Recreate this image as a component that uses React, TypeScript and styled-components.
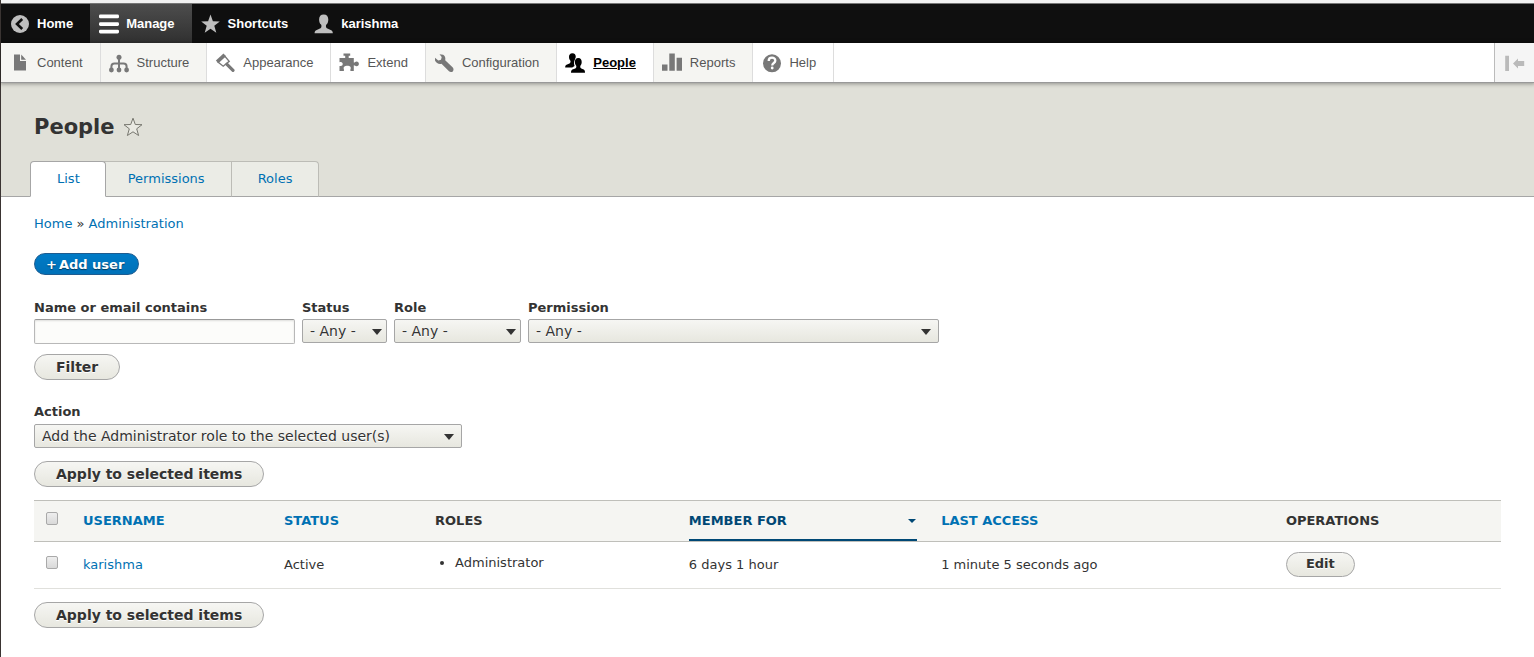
import React, { ReactNode } from "react";
import styled, { createGlobalStyle, css } from "styled-components";

const GlobalStyle = createGlobalStyle`
  *, *::before, *::after { box-sizing: border-box; }
  html { background: #fff; }
  body {
    margin: 0;
    color: #333;
    font: 13px/20px "DejaVu Sans", "Lucida Grande", sans-serif;
  }
  a { color: #0071b3; text-decoration: none; }
`;

const Page = styled.div`
  min-height: 100vh;
  border-left: 1px solid #3a3432;
`;

const TopBar = styled.nav`
  display: flex;
  height: 43px;
  border-top: 3px solid #f2f2f2;
  background: #0f0f0f;
  box-shadow: inset 0 1px 0 #777;
  padding-top: 1px;
  font-family: "Liberation Sans", Arial, sans-serif;
`;

const BarTab = styled.a<{ $active?: boolean }>`
  display: flex;
  align-items: center;
  gap: 7px;
  padding: 0 17px 0 9px;
  color: #fff;
  font-weight: bold;
  ${(p) => p.$active && css`background: linear-gradient(#4d4d4d, #303030);`}
  svg { color: ${(p) => (p.$active ? "#fff" : "#bebebe")}; }
`;

const Tray = styled.nav`
  position: relative;
  display: flex;
  height: 39px;
  background: #fff;
  box-shadow: 0 1px 0 #999, 0 1px 4px 1px rgba(0, 0, 0, 0.35);
  font-family: "Liberation Sans", Arial, sans-serif;
`;

const TrayItem = styled.a<{ $tinted?: boolean; $active?: boolean }>`
  display: flex;
  align-items: center;
  gap: 8px;
  padding: 0 17px 0 8px;
  border-right: 1px solid #ddd;
  background: ${(p) => (p.$tinted ? "#f5f5f2" : "#fff")};
  color: #565656;
  svg { color: #787878; }
  ${(p) =>
    p.$active &&
    css`
      color: #000;
      font-weight: bold;
      text-decoration: underline;
      svg { color: #000; }
    `}
`;

const TrayToggle = styled.button`
  display: flex;
  align-items: center;
  justify-content: center;
  width: 40px;
  margin-left: auto;
  padding: 0;
  border: 0;
  border-left: 1px solid #bbb;
  background: #f5f5f5;
  color: #bababa;
`;

const Glyph = styled.svg`
  display: block;
  flex: none;
  width: 20px;
  height: 20px;
  fill: currentColor;
`;

const Header = styled.header`
  padding: 33px 29px 0;
  border-bottom: 1px solid #a6a6a6;
  background: #e0e0d8;
`;

const TitleRow = styled.div`
  display: flex;
  align-items: center;
  gap: 8px;
  padding-left: 4px;
  margin-bottom: 22px;
`;

const Title = styled.h1`
  margin: 0;
  font-size: 21px;
  line-height: 24px;
`;

const StarButton = styled.button`
  padding: 0;
  border: 0;
  background: none;
  color: #77776f;
`;

const Tabs = styled.nav`
  display: flex;
  margin-bottom: -1px;
`;

const Tab = styled.a<{ $active?: boolean }>`
  padding: 7px 26px;
  border: 1px solid #bcbcb6;
  border-left-width: 0;
  border-bottom-color: #a6a6a6;
  background: #ebece6;
  &:last-child { border-top-right-radius: 4px; }
  ${(p) =>
    p.$active &&
    css`
      z-index: 1;
      margin-right: -4px;
      border-color: #a6a6a6 #a6a6a6 #fff;
      border-left-width: 1px;
      padding-right: 25px;
      border-radius: 4px 4px 0 0;
      background: #fff;
    `}
`;

const Main = styled.main`
  padding: 17px 33px 29px;
`;

const Breadcrumb = styled.nav`
  margin-bottom: 19px;
`;

const AddLink = styled.a`
  display: inline-flex;
  gap: 2px;
  height: 22px;
  padding: 0 14px 0 11px;
  border: 1px solid #1e5c90;
  border-radius: 11px;
  background: linear-gradient(#007bc6, #0071b8);
  color: #fff;
  font-weight: bold;
  line-height: 22px;
  vertical-align: top;
  text-shadow: 0 1px 1px rgba(0, 0, 0, 0.5);
`;

const FilterRow = styled.div`
  display: flex;
  flex-wrap: wrap;
  gap: 7px;
  margin: 23px 0 10px;
`;

const Field = styled.div`
  display: flex;
  flex-direction: column;
`;

const Label = styled.label`
  height: 21px;
  font-weight: bold;
`;

const TextInput = styled.input`
  width: 261px;
  height: 25px;
  border: 1px solid #b8b8b8;
  border-top-color: #999;
  border-radius: 2px;
  background: #fcfcfa;
  box-shadow: inset 0 1px 2px rgba(0, 0, 0, 0.12);
`;

const SelectBox = styled.span<{ $width: number; $inset: number }>`
  position: relative;
  width: ${(p) => p.$width}px;
  &::after {
    content: "";
    position: absolute;
    top: 10px;
    right: ${(p) => p.$inset}px;
    border: 5px solid transparent;
    border-top: 6px solid #333;
    border-bottom: 0;
    pointer-events: none;
  }
`;

const Select = styled.select`
  display: block;
  appearance: none;
  width: 100%;
  height: 24px;
  padding: 0 7px;
  border: 1px solid #a6a6a6;
  border-radius: 2px;
  background: linear-gradient(#f6f6f3, #e7e7df);
  color: #333;
  font: 14px/20px "DejaVu Sans", sans-serif;
  text-shadow: 0 1px #fff;
`;

const Button = styled.button<{ $small?: boolean }>`
  display: block;
  height: ${(p) => (p.$small ? 25 : 26)}px;
  margin-bottom: ${(p) => (p.$small ? 2 : 0)}px;
  padding: 0 ${(p) => (p.$small ? 19 : 21)}px;
  border: 1px solid #a6a6a6;
  border-radius: 13px;
  background: linear-gradient(#f6f6f3, #e7e7df);
  color: #333;
  font: bold ${(p) => (p.$small ? 13 : 14)}px/20px "DejaVu Sans", sans-serif;
  text-shadow: 0 1px #fff;
`;

const ActionField = styled(Field)`
  gap: 1px;
  margin: 22px 0 13px;
`;

const Table = styled.table`
  width: 100%;
  margin: 13px 0;
  border-collapse: separate;
  border-spacing: 0;
  table-layout: fixed;
  text-align: left;
`;

const Col = styled.col<{ $width?: string }>`
  width: ${(p) => p.$width ?? "auto"};
`;

const Th = styled.th`
  height: 42px;
  padding: 0 12px;
  border: solid #bfbfba;
  border-width: 1px 0;
  background: #f5f5f2;
  text-transform: uppercase;
`;

const SortLink = styled.a`
  display: flex;
  align-items: center;
  justify-content: space-between;
  height: 40px;
  padding-top: 2px;
  border-bottom: 2px solid #004875;
  color: #004875;
  &::after {
    content: "";
    margin-right: 1px;
    border: 4px solid transparent;
    border-top-color: #004875;
    border-bottom: 0;
  }
`;

const Td = styled.td`
  height: 47px;
  padding: 0 12px;
  border-bottom: 1px solid #e0e0dc;
`;

const RoleList = styled.ul`
  margin: 0 0 4px;
  padding-left: 20px;
`;

const Check = styled.input`
  display: block;
  appearance: none;
  width: 12px;
  height: 13px;
  margin: 0 0 6px;
  border: 1px solid #a9a9a9;
  border-radius: 2px;
  background: linear-gradient(#eee, #d9d9d9);
`;

const Icon = ({ children }: { children: ReactNode }) => (
  <Glyph viewBox="0 0 20 20" aria-hidden="true">{children}</Glyph>
);

const icons = {
  back: (
    <Icon>
      <circle cx="10" cy="10" r="9" />
      <path d="M12.2 5 7 10l5.200 5" fill="none" stroke="#0f0f0f" strokeWidth="2.6" />
    </Icon>
  ),
  menu: (
    <Icon>
      <rect y="0.5" width="20" height="3.8" rx="1.4" />
      <rect y="8.2" width="20" height="3.8" rx="1.4" />
      <rect y="15.7" width="20" height="3.8" rx="1.4" />
    </Icon>
  ),
  star: (
    <Icon>
      <path d="M9.500.5 11.900 7.200 18.800 7.400 13.300 11.700 15.300 18.800 9.500 14.700 3.700 18.800 5.700 11.700.2 7.400 7.100 7.200z" />
    </Icon>
  ),
  person: (
    <Icon>
      <path d="M9.700.5C6.700.5 5.100 2.500 5.100 5.400C5.100 7.600 5.700 9.300 7 10.600C7.700 11.600 7.700 13.400 6.500 14.300L2.200 16.200C1 16.800.6 17.900.6 19.300H18.800C18.800 17.900 18.400 16.800 17.200 16.200L12.900 14.300C11.700 13.400 11.700 11.600 12.400 10.600C13.700 9.300 14.300 7.600 14.300 5.400C14.300 2.500 12.700.5 9.700.5z" />
    </Icon>
  ),
  content: (
    <Icon>
      <path d="M5 1.500H11V8H17V17.500H5z" />
      <path d="M12.200 1.500V6.700H17z" />
    </Icon>
  ),
  structure: (
    <Icon>
      <circle cx="10" cy="4.300" r="2.500" />
      <circle cx="2.400" cy="17" r="2.400" />
      <circle cx="10" cy="17" r="2.400" />
      <circle cx="17.600" cy="17" r="2.400" />
      <path d="M10 5V17M2.400 17V13.500Q2.400 10.500 5.400 10.500H14.600Q17.600 10.500 17.600 13.500V17" fill="none" stroke="currentColor" strokeWidth="2" />
    </Icon>
  ),
  appearance: (
    <Icon>
      <path d="M.9 7.500 8.500.5 10.800 3 3.300 10.200z" />
      <path d="M3.200 9.300 9.900 3.200 14.200 8.300 8.200 13.200z" fill="none" stroke="currentColor" strokeWidth="1.400" />
      <path d="M12 11.300 18 17.300" stroke="currentColor" strokeWidth="3.200" strokeLinecap="round" />
    </Icon>
  ),
  extend: (
    <Icon>
      <path d="M4.500.5H11.200V2.700H9.700V4.900H14.800V9.500C16.200 9.500 16.200 8.400 17.500 8.400C20.700 8.400 20.700 13.200 17.500 13.200C16.200 13.200 16.200 12.200 14.800 12.200V18H11.400V16.200C12.400 14.400 11.200 12.700 9.200 12.700H7.500C5.500 12.700 3.900 14.400 4.900 16.200V18H.5V12.900C2.900 13.500 3.700 12.200 3.700 11S2.900 8.500.5 9.200V4.900H6.200V2.700H4.500z" />
    </Icon>
  ),
  config: (
    <Icon>
      <path d="M5.500 1.200 9.200 1.800C11 3 11.700 5 11.200 7.200L18.800 14.600C19.800 15.700 19.700 17.500 18.800 18.400S16 19.400 15 18.300L7.500 10.800C5 11.600 2.300 10.300 1 7.500V4.800L4.300 7.500 7 6.700 7.700 4z" />
    </Icon>
  ),
  people: (
    <Icon>
      <path d="M7.400.2C4.900.2 4 2 4 4C4 5.800 4.700 7 5.400 7.800C5.800 9 5.400 10 4.500 10.400L1.500 11.800C.5 12.300.2 13.200.2 14.400H7.200L9.600 12.900C8.900 11.500 8.700 9 9.800 6.800L10.800 4C10.800 1.800 9.800.2 7.400.2z" />
      <path d="M13.300 5C10.800 5 9.900 6.800 9.900 8.900C9.900 10.600 10.500 11.800 11.200 12.700C11.600 13.900 11.200 15 10.300 15.400L7.400 16.600C6.400 17.100 6 18.300 6 19.700H20C20 18.300 19.700 17.100 18.700 16.600L16.300 15.400C15.400 15 15 13.900 15.400 12.700C16.100 11.800 16.700 10.600 16.700 8.900C16.700 6.800 15.800 5 13.300 5z" />
    </Icon>
  ),
  reports: (
    <Icon>
      <path d="M0 11.500H5.500V17.800H0zM7.300.5H12.800V17.800H7.300zM14.600 4.800H20V17.800H14.600z" />
    </Icon>
  ),
  help: (
    <Icon>
      <circle cx="11" cy="10.300" r="9" />
      <path d="M7.700 7.900C7.700 3.700 14.300 3.700 14.300 7.700C14.300 10 11.200 10 11.200 12.500" fill="none" stroke="#fff" strokeWidth="2.300" />
      <circle cx="11.200" cy="15" r="1.400" fill="#fff" />
    </Icon>
  ),
};

type SelectFieldProps = { id: string; label: string; value: string; width: number; inset: number };

const SelectControl = ({ id, value, width, inset }: Omit<SelectFieldProps, "label">) => (
  <SelectBox $width={width} $inset={inset}>
    <Select id={id} defaultValue={value}>
      <option>{value}</option>
    </Select>
  </SelectBox>
);

const SelectField = ({ label, ...rest }: SelectFieldProps) => (
  <Field>
    <Label htmlFor={rest.id}>{label}</Label>
    <SelectControl {...rest} />
  </Field>
);

export default function App() {
  return (
    <>
      <GlobalStyle />
      <Page>
        <TopBar aria-label="Toolbar">
          <BarTab href="#home">{icons.back}Home</BarTab>
          <BarTab href="#manage" $active>{icons.menu}Manage</BarTab>
          <BarTab href="#shortcuts">{icons.star}Shortcuts</BarTab>
          <BarTab href="#account">{icons.person}karishma</BarTab>
        </TopBar>
        <Tray aria-label="Administration menu">
          <TrayItem href="#content" $tinted>{icons.content}Content</TrayItem>
          <TrayItem href="#structure" $tinted>{icons.structure}Structure</TrayItem>
          <TrayItem href="#appearance">{icons.appearance}Appearance</TrayItem>
          <TrayItem href="#extend">{icons.extend}Extend</TrayItem>
          <TrayItem href="#configuration" $tinted>{icons.config}Configuration</TrayItem>
          <TrayItem href="#people" $active>{icons.people}People</TrayItem>
          <TrayItem href="#reports" $tinted>{icons.reports}Reports</TrayItem>
          <TrayItem href="#help">{icons.help}Help</TrayItem>
          <TrayToggle type="button" aria-label="Vertical orientation">
            <Icon>
              <path d="M.2 2.700H4V18H.2zM8 10.400 13 5.500V8H19.200V13H13V15.400z" />
            </Icon>
          </TrayToggle>
        </Tray>

        <Header>
          <TitleRow>
            <Title>People</Title>
            <StarButton type="button" aria-label="Add to shortcuts">
              <Glyph viewBox="0 0 20 20" aria-hidden="true">
                <path d="M10 1.200 12.300 7.500 19 7.700 13.700 11.800 15.600 18.500 10 14.800 4.400 18.500 6.300 11.800 1 7.700 7.700 7.500z" fill="#e9e9e2" stroke="currentColor" strokeWidth="1" strokeLinejoin="round" />
              </Glyph>
            </StarButton>
          </TitleRow>
          <Tabs aria-label="Tabs">
            <Tab href="#list" $active>List</Tab>
            <Tab href="#permissions">Permissions</Tab>
            <Tab href="#roles">Roles</Tab>
          </Tabs>
        </Header>

        <Main>
          <Breadcrumb aria-label="Breadcrumb">
            <a href="#home">Home</a> » <a href="#admin">Administration</a>
          </Breadcrumb>
          <AddLink href="#add"><span>+</span>Add user</AddLink>

          <FilterRow>
            <Field>
              <Label htmlFor="name">Name or email contains</Label>
              <TextInput id="name" type="text" />
            </Field>
            <SelectField id="status" label="Status" value="- Any -" width={85} inset={5} />
            <SelectField id="role" label="Role" value="- Any -" width={127} inset={5} />
            <SelectField id="permission" label="Permission" value="- Any -" width={411} inset={8} />
          </FilterRow>
          <Button type="button">Filter</Button>

          <ActionField>
            <Label htmlFor="action">Action</Label>
            <SelectControl id="action" value="Add the Administrator role to the selected user(s)" width={428} inset={8} />
          </ActionField>
          <Button type="button">Apply to selected items</Button>

          <Table>
            <colgroup>
              <Col $width="37px" />
              <Col $width="13.7%" />
              <Col $width="10.3%" />
              <Col $width="17.3%" />
              <Col $width="17.2%" />
              <Col $width="23.5%" />
              <Col />
            </colgroup>
            <thead>
              <tr>
                <Th><Check type="checkbox" aria-label="Select all rows" /></Th>
                <Th><a href="#sort-name">Username</a></Th>
                <Th><a href="#sort-status">Status</a></Th>
                <Th>Roles</Th>
                <Th><SortLink href="#sort-member">Member for</SortLink></Th>
                <Th><a href="#sort-access">Last access</a></Th>
                <Th>Operations</Th>
              </tr>
            </thead>
            <tbody>
              <tr>
                <Td><Check type="checkbox" aria-label="Select karishma" /></Td>
                <Td><a href="#karishma">karishma</a></Td>
                <Td>Active</Td>
                <Td><RoleList><li>Administrator</li></RoleList></Td>
                <Td>6 days 1 hour</Td>
                <Td>1 minute 5 seconds ago</Td>
                <Td><Button type="button" $small>Edit</Button></Td>
              </tr>
            </tbody>
          </Table>
          <Button type="button">Apply to selected items</Button>
        </Main>
      </Page>
    </>
  );
}
